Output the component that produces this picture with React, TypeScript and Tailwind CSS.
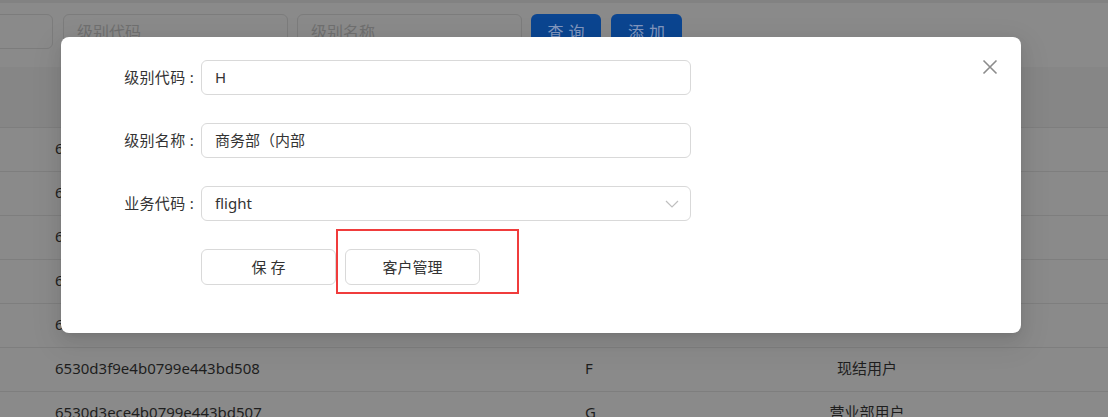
import React from "react";

const font = { fontFamily: '"Noto Sans", "Noto Sans CJK SC", sans-serif' };

const rows = [
  ["6530d3fae4b0799e443bd50d", "A", "普通用户"],
  ["6530d3fae4b0799e443bd50c", "B", "协议用户"],
  ["6530d3fae4b0799e443bd50b", "C", "代理用户"],
  ["6530d3fae4b0799e443bd50a", "D", "月结用户"],
  ["6530d3f9e4b0799e443bd509", "E", "内部用户"],
  ["6530d3f9e4b0799e443bd508", "F", "现结用户"],
  ["6530d3ece4b0799e443bd507", "G", "营业部用户"],
];

function Field({ label, children }: { label: string; children: React.ReactNode }) {
  return (
    <div className="flex items-center">
      <div className="w-[133px] text-right text-[15px] text-[#333] tracking-[0.3px]">{`${label} :`}</div>
      <div className="ml-[7px] w-[490px]">{children}</div>
    </div>
  );
}

export default function App() {
  return (
    <div className="relative w-[1108px] h-[417px] overflow-hidden bg-[#8a8a8a]" style={font}>
      {/* dimmed page */}
      <div className="h-[3px] bg-[#828282]" />
      <div className="h-[64px] flex items-start pt-[11px] ml-[-172px]">
        <div className="w-[225px] h-[35px] rounded-[6px] border border-[#7c7c7c]" />
        <div className="ml-[10px] w-[225px] h-[35px] rounded-[6px] border border-[#7c7c7c] flex items-center pl-[13px] text-[16px] text-[#6f6f6f]">
          级别代码
        </div>
        <div className="ml-[9px] w-[225px] h-[35px] rounded-[6px] border border-[#7c7c7c] flex items-center pl-[13px] text-[16px] text-[#6f6f6f]">
          级别名称
        </div>
        <div className="ml-[9px] w-[70px] h-[36px] rounded-[6px] bg-[#0b4590] flex items-center justify-center text-[16px] tracking-[5px] pl-[5px] text-[#8196bd]">
          查询
        </div>
        <div className="ml-[10px] w-[71px] h-[36px] rounded-[6px] bg-[#0b4590] flex items-center justify-center text-[16px] tracking-[5px] pl-[5px] text-[#8196bd]">
          添加
        </div>
      </div>
      <div className="h-[61px] bg-[#868686] border-b border-[#7e7e7e]" />
      {rows.map((r) => (
        <div key={r[0]} className="h-[44px] border-b border-[#7e7e7e] flex items-center pb-[2px] text-[15px] text-[#1e1e1e]">
          <div className="w-[585px] pl-[55px]">{r[0]}</div>
          <div className="w-[200px]">{r[1]}</div>
          <div className="w-[164px] text-center">{r[2]}</div>
        </div>
      ))}

      {/* modal */}
      <div className="absolute left-[61px] top-[37px] w-[960px] h-[296px] bg-white rounded-[8px] shadow-[0_6px_16px_0_rgba(0,0,0,0.08),0_3px_6px_-4px_rgba(0,0,0,0.12),0_9px_28px_8px_rgba(0,0,0,0.05)]">
        <button className="absolute right-[23px] top-[22px] w-[16px] h-[16px] flex items-center justify-center">
          <svg width="16" height="16" viewBox="0 0 16 16" fill="none">
            <path d="M1.5 1.5 L14.5 14.5 M14.5 1.5 L1.5 14.5" stroke="#8c8c8c" strokeWidth="1.6" />
          </svg>
        </button>
        <div className="flex flex-col gap-[28px] pt-[23px]">
          <Field label="级别代码">
            <div className="h-[35px] rounded-[6px] border border-[#d9d9d9] flex items-center pl-[13px] text-[15px] text-[#333]">H</div>
          </Field>
          <Field label="级别名称">
            <div className="h-[35px] rounded-[6px] border border-[#d9d9d9] flex items-center pl-[13px] text-[15px] text-[#333]">商务部（内部</div>
          </Field>
          <Field label="业务代码">
            <div className="h-[35px] rounded-[6px] border border-[#d9d9d9] flex items-center pl-[13px] pr-[11px] text-[15px] text-[#333]">
              <span className="flex-1">flight</span>
              <svg width="14" height="10" viewBox="0 0 14 10" fill="none">
                <path d="M1 2 L7 8 L13 2" stroke="#bfbfbf" strokeWidth="1.2" />
              </svg>
            </div>
          </Field>
          <div className="flex items-center gap-[9px] pl-[140px]">
            <button className="w-[135px] h-[36px] rounded-[6px] border border-[#d9d9d9] bg-white text-[15px] text-[#333]">保 存</button>
            <button className="w-[135px] h-[36px] rounded-[6px] border border-[#d9d9d9] bg-white text-[15px] text-[#333]">客户管理</button>
          </div>
        </div>
        <div className="absolute left-[275px] top-[192px] w-[183px] h-[65px] border-2 border-[#f03c3c]" />
      </div>
    </div>
  );
}
